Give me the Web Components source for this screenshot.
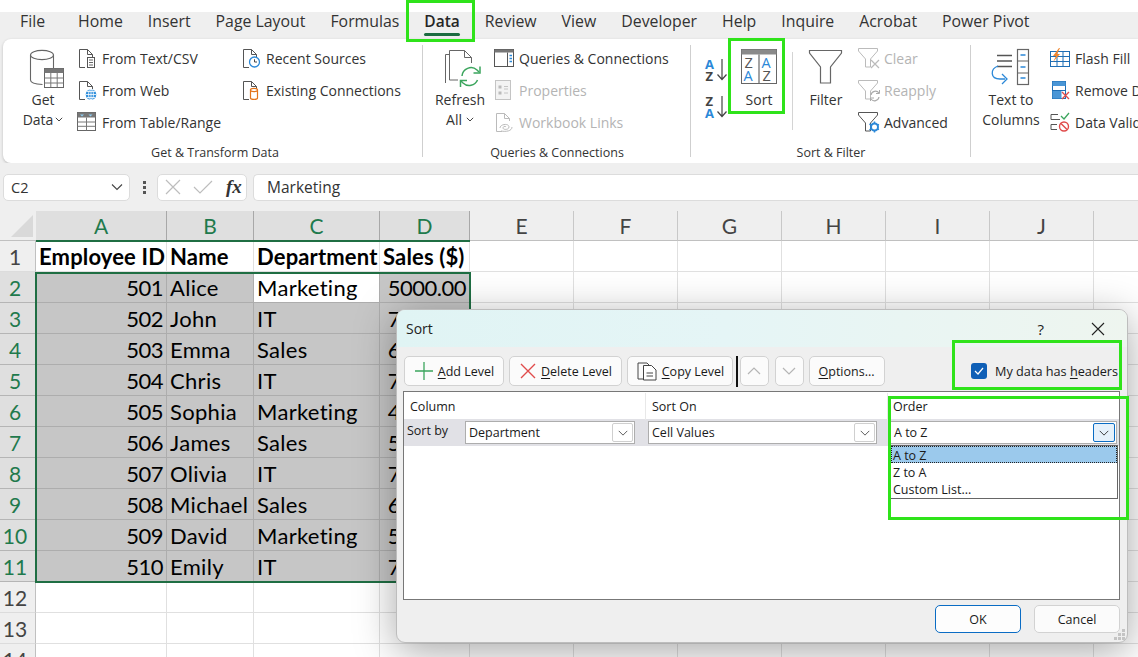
<!DOCTYPE html>
<html>
<head>
<meta charset="utf-8">
<title>Sort</title>
<style>
  html, body { margin: 0; padding: 0; background: #efefef; }
  body { width: 1138px; height: 657px; overflow: hidden; position: relative; font-family: "Open Sans", "Noto Sans", sans-serif; color: #262626; }
</style>
</head>
<body>
<excel-app></excel-app>
<script>
const page = 'M2.5 19.5V1.5h8l5 5v2.500M10.500 1.500V6.500h5M2.500 19.500H8'
const pageFill = `<path d="M2.500 19.500V1.500h8l5 5v13z" fill="#fff"/><path d="${page}" fill="none" stroke="#555"/>`
const grayPage = `<path d="${page}" fill="none" stroke="#bbb"/>`
const funnel = (c) => `<path d="M1.500 1.500h19v2.500l-7 8v8h-5v-8l-7-8z" fill="#fff" stroke="${c}"/>`

const ICONS = {
  getData: [36, 40, `<path d="M1.500 6c0-2.600 5.200-4.600 11.500-4.600S24.500 3.400 24.500 6v14M1.500 6v25c0 2.400 4.500 4.200 12 4.500M1.500 6c0 2.600 5.200 4.600 11.500 4.600S24.500 8.600 24.500 6" fill="#fff" stroke="#666" stroke-width="1.100"/><rect x="15.500" y="19.500" width="19" height="19" fill="#fff" stroke="#666"/><rect x="15.500" y="19.500" width="19" height="4.500" fill="#777"/><path d="M21.800 24v14M28.200 24v14M15.500 29h19M15.500 34h19" stroke="#777"/>`],
  fromText: [20, 20, pageFill + `<rect x="10.500" y="9.500" width="7" height="10" fill="#fff" stroke="#555"/><path d="M12 12h4M12 14.500h4M12 17h4" stroke="#666"/>`],
  fromWeb: [20, 20, pageFill + `<circle cx="14" cy="14.500" r="5.300" fill="#2f8fdc"/><path d="M8.700 14.500h10.600M14 9.200v10.600M10 11.500h8M10 17.500h8" stroke="#fff" stroke-width=".8"/><ellipse cx="14" cy="14.500" rx="2.400" ry="5.300" fill="none" stroke="#fff" stroke-width=".8"/>`],
  fromTable: [20, 20, `<rect x=".5" y=".5" width="18" height="18" fill="#fff" stroke="#666"/><rect x=".5" y=".5" width="18" height="5" fill="#777"/><path d="M3 2.500l2 2 2-2zM11.500 2.500l2 2 2-2z" fill="#8fd0f5"/><path d="M.5 10h18M.5 14.300h18M9.500 5.500v13" stroke="#777"/>`],
  recent: [20, 20, pageFill + `<circle cx="13.500" cy="14" r="5" fill="#fff" stroke="#2b88d8" stroke-width="1.300"/><path d="M13.500 11.300V14h2.500" fill="none" stroke="#444"/>`],
  existing: [20, 20, pageFill + `<path d="M9.500 10v8c0 .8 1.400 1.400 3.500 1.400s3.500-.6 3.500-1.400v-8z" fill="#fff" stroke="#e3741b" stroke-width="1.200"/><ellipse cx="13" cy="10" rx="3.500" ry="1.600" fill="#fff" stroke="#e3741b" stroke-width="1.200"/>`],
  refresh: [38, 40, `<path d="M1.500 34V5.500h4" fill="none" stroke="#666"/><path d="M5.500 31V1.500h15l7 7V14" fill="#fff" stroke="#666"/><path d="M20.500 1.500v7h7" fill="none" stroke="#666"/><path d="M5.500 31H14" stroke="#666"/><path d="M18 27a9 9 0 0 1 15-6l2 2M33.500 31a9 9 0 0 1-14.500 3l-2-2" fill="none" stroke="#3ba55d" stroke-width="1.500"/><path d="M36 17.500v6.500h-6.500M16.500 38v-6.500H23" fill="none" stroke="#3ba55d" stroke-width="1.500"/>`],
  queries: [20, 20, `<rect x=".5" y="1.500" width="19" height="17" fill="#fff" stroke="#555"/><rect x=".5" y="1.500" width="19" height="3" fill="#777"/><path d="M13.500 4.500v14" stroke="#555"/><path d="M15.500 7.500h2.500M15.500 10.500h2.500M15.500 13.500h2.500" stroke="#2b88d8" stroke-width="1.500"/>`],
  properties: [20, 20, `<rect x="1.500" y=".5" width="15" height="19" fill="#f3f3f3" stroke="#c4c4c4"/><path d="M4.500 5.500h3v3h-3zM4.500 11.500h3v3h-3z" fill="#bbb"/><path d="M10 6.500h4M10 9h4M10 13h4" stroke="#c4c4c4"/>`],
  links: [20, 20, grayPage + `<path d="M6 16c0-4 9-5 9-1 0 3-6 3-6 1s3-2 3-1M7 19c5 1 11 0 11-4" fill="none" stroke="#bbb"/>`],
  sortAsc: [23, 24, `<text x="0" y="11" font-size="13" font-weight="700" fill="#2b88d8" font-family="Open Sans">A</text><text x=".5" y="23" font-size="13" font-weight="700" fill="#444" font-family="Open Sans">Z</text><path d="M17 1v20M12.500 16.500l4.500 5 4.500-5" fill="none" stroke="#444" stroke-width="1.200"/>`],
  sortDesc: [23, 24, `<text x=".5" y="11" font-size="13" font-weight="700" fill="#444" font-family="Open Sans">Z</text><text x="0" y="23" font-size="13" font-weight="700" fill="#2b88d8" font-family="Open Sans">A</text><path d="M17 1v20M12.500 16.500l4.500 5 4.500-5" fill="none" stroke="#444" stroke-width="1.200"/>`],
  sort: [36, 36, `<rect x=".5" y=".5" width="35" height="34" fill="#fff" stroke="#666"/><rect x=".5" y=".5" width="35" height="5" fill="#8a8a8a"/><path d="M17.500 5.500v29M18.500 5.500v29" stroke="#666" stroke-width=".6"/><text x="3.500" y="19" font-size="14.500" fill="#555" font-family="Open Sans">Z</text><text x="2.500" y="32" font-size="14.500" fill="#2b88d8" font-family="Open Sans">A</text><text x="20.500" y="19" font-size="14.500" fill="#2b88d8" font-family="Open Sans">A</text><text x="21.500" y="32" font-size="14.500" fill="#555" font-family="Open Sans">Z</text>`],
  filter: [36, 36, `<path d="M1.500 1.500h32v2.500L22.500 18v16h-10V18L1.500 4z" fill="#fff" stroke="#666" stroke-width="1.200"/>`],
  clear: [24, 22, funnel('#bbb') + `<path d="M14 13l8 8M22 13l-8 8" stroke="#bbb" stroke-width="1.200"/>`],
  reapply: [24, 22, funnel('#bbb') + `<path d="M14 16a4.500 4.500 0 0 1 8-2M22 18a4.500 4.500 0 0 1-8 2" fill="none" stroke="#aaa" stroke-width="1.200"/><path d="M22.500 11v3.500H19M13.500 22v-3h3.500" fill="none" stroke="#aaa"/>`],
  advanced: [24, 22, funnel('#555') + `<circle cx="17.500" cy="16" r="3.500" fill="#fff" stroke="#2b88d8" stroke-width="2"/><path d="M17.500 10.500v11M12.500 13l10 6M12.500 19l10-6" stroke="#2b88d8" stroke-width="1.500" stroke-dasharray="1.500 8"/>`],
  textCols: [42, 38, `<path d="M10 6.500h15M10 12h15M10 17.500h15" stroke="#555" stroke-width="1.300"/><rect x="30.500" y=".5" width="11" height="35" fill="#fff" stroke="#666" stroke-width="1.200"/><path d="M30.500 12h11M30.500 24h11" stroke="#666" stroke-width="1.200"/><path d="M33.500 6h5M33.500 18h5M33.500 29h5" stroke="#2b88d8" stroke-width="1.500"/><path d="M11 17c-8 3-8 13 2 13h5M15 25l5 5-5 5" fill="none" stroke="#2b88d8" stroke-width="1.300"/>`],
  flash: [20, 20, `<rect x=".5" y="3.500" width="19" height="15" fill="#fff" stroke="#1f6eb5"/><path d="M.5 8.500h19M.5 13.500h19M7 3.500v15M13 3.500v15" stroke="#1f6eb5"/><path d="M9 0L3 8h3L3 14l7-8H7l3-6z" fill="#f0862e"/>`],
  dupes: [20, 20, `<rect x="2.500" y="1.500" width="13" height="17" fill="#fff" stroke="#1f6eb5"/><rect x="2.500" y="1.500" width="13" height="4.500" fill="#4a96d6"/><rect x="2.500" y="11" width="9" height="7.500" fill="#4a96d6"/><path d="M2.500 10.500h13" stroke="#1f6eb5"/><path d="M12 12l7 7M19 12l-7 7" stroke="#e04b4b" stroke-width="1.400"/>`],
  validate: [20, 20, `<path d="M1 2.500h7M1 7.500h9M1 12.500h6M1 17.500h6" stroke="#555" stroke-width="1.200"/><path d="M1 2.500v5M1 12.500v5" stroke="#555"/><path d="M11 4l3 3 5-6" fill="none" stroke="#3ba55d" stroke-width="1.300"/><circle cx="14" cy="14.500" r="4.500" fill="#fff" stroke="#e04b4b" stroke-width="1.400"/><path d="M11 11.500l6 6" stroke="#e04b4b" stroke-width="1.400"/>`],
  plus: [20, 20, `<path d="M10 1v18M1 10h18" stroke="#3ba55d" stroke-width="1.300"/>`],
  cross: [18, 18, `<path d="M2 2l14 14M16 2L2 16" stroke="#e04b4b" stroke-width="1.400"/>`],
  copy: [22, 20, `<path d="M2 18V2h9l2 2" fill="none" stroke="#444"/><path d="M2 18h5" stroke="#444"/><path d="M7.500 19V4.500h8l4.500 4.500v10z" fill="#fff" stroke="#444"/><path d="M10.500 12h6.500M10.500 15h6.500" stroke="#444"/>`],
  chevron: [12, 8, `<path d="M1 1.500l5 5 5-5" fill="none" stroke="currentColor" stroke-width="1.100"/>`],
  mini: [8, 5, `<path d="M.8 .8L4 4l3.200-3.200" fill="none" stroke="#444" stroke-width="1"/>`],
  chevronUp: [14, 8, `<path d="M1 7l6-6 6 6" fill="none" stroke="#b5b5b5" stroke-width="1.200"/>`],
  chevronDown: [14, 8, `<path d="M1 1l6 6 6-6" fill="none" stroke="#b5b5b5" stroke-width="1.200"/>`],
  close: [14, 14, `<path d="M1 1l12 12M13 1L1 13" stroke="#222" stroke-width="1.100"/>`],
  x: [16, 16, `<path d="M1 1l14 14M15 1L1 15" stroke="#bdbdbd" stroke-width="1.200"/>`],
  check: [20, 14, `<path d="M1 7l6 6L19 1" fill="none" stroke="#bdbdbd" stroke-width="1.200"/>`],
  tick: [10, 8, `<path d="M1 4l3 3 5-6" fill="none" stroke="#fff" stroke-width="1.200"/>`],
  grip: [12, 12, `<path d="M8 0h3v3H8zM4 4h3v3H4zM8 4h3v3H8zM0 8h3v3H0zM4 8h3v3H4zM8 8h3v3H8z" fill="#c4c4c4"/>`],
  corner: [22, 22, `<path d="M22 0v22H0z" fill="#d9d9d9"/>`]
}

class UiIcon extends HTMLElement {
  connectedCallback() {
    const [w, h, body] = ICONS[this.getAttribute('name')]
    this.attachShadow({ mode: 'open' }).innerHTML = `
      <style>:host { display: block; flex: none; width: ${w}px; height: ${h}px; line-height: 0; } svg { overflow: visible; }</style>
      <svg width="${w}" height="${h}" viewBox="0 0 ${w} ${h}">${body}</svg>`
  }
}

class RibbonTab extends HTMLElement {
  constructor() {
    super()
    this.attachShadow({ mode: 'open' }).innerHTML = `
      <style>
        :host { display: block; position: relative; font-size: 15.850px; line-height: 19px; color: #333; white-space: nowrap; }
        :host([active]) { font-weight: 600; font-size: 15.500px; color: #262626; }
        :host([active])::after { content: ""; position: absolute; left: 0; right: 0; top: 21px; height: 2.500px; background: #1c6b41; border-radius: 2px; }
      </style><slot></slot>`
  }
}

class RibbonGroup extends HTMLElement {
  constructor() {
    super()
    this.attachShadow({ mode: 'open' }).innerHTML = `
      <style>
        :host { display: flex; flex-direction: column; flex: none; position: relative; height: 124px; }
        :host(:not(:last-child))::after { content: ""; position: absolute; right: 0; top: 6px; bottom: 6px; width: 1px; background: #cfcfcf; }
        .body { display: flex; flex: 1; padding-top: 3px; min-height: 0; }
        .label { height: 20px; text-align: center; font-size: 12.500px; line-height: 19px; color: #333; white-space: nowrap; }
        :host(:first-child) .label { padding-left: 4px; }
      </style>
      <div class="body"><slot></slot></div>
      <div class="label"></div>`
  }
  connectedCallback() {
    this.shadowRoot.querySelector('.label').textContent = this.getAttribute('label')
  }
}

class BigButton extends HTMLElement {
  constructor() {
    super()
    this.attachShadow({ mode: 'open' }).innerHTML = `
      <style>
        :host { display: flex; flex: none; flex-direction: column; align-items: center; padding-top: 7px; box-sizing: border-box; font-size: 14px; line-height: 20px; text-align: center; color: #333; white-space: nowrap; }
        .icon { height: 41px; }
      </style>
      <div class="icon"><slot name="icon"></slot></div>
      <div><slot></slot></div>`
  }
}

class SmallButton extends HTMLElement {
  constructor() {
    super()
    this.attachShadow({ mode: 'open' }).innerHTML = `
      <style>
        :host { display: flex; align-items: center; gap: 5px; height: 32px; font-size: 14px; white-space: nowrap; color: #333; }
        :host([disabled]) { color: #b4b4b4; }
      </style>
      <slot name="icon"></slot><slot></slot>`
  }
}

class ExcelRibbon extends HTMLElement {
  constructor() {
    super()
    this.attachShadow({ mode: 'open' }).innerHTML = `
      <style>
        :host { display: block; }
        .top { height: 12px; background: #fff; }
        .tabs { display: flex; height: 27px; padding-left: 20px; gap: 25px; background: #efefef; }
        .card { display: flex; height: 124px; margin-left: 3px; background: #fff; border-radius: 8px 0 0 8px; box-shadow: 0 1px 3px rgba(0,0,0,.22); }
        .col { display: flex; flex-direction: column; flex: none; }
        .sort { display: flex; flex-direction: column; flex: none; gap: 13px; padding-top: 16px; margin-left: 14px; }
        .rule { flex: none; width: 1px; height: 78px; margin-top: 10px; background: #d4d4d4; }
        .down { display: inline-block; vertical-align: 3px; margin-left: 2px; }
      </style>
      <div class="top"></div>
      <div class="tabs">
        <ribbon-tab style="margin-right:8px">File</ribbon-tab><ribbon-tab>Home</ribbon-tab><ribbon-tab>Insert</ribbon-tab><ribbon-tab>Page Layout</ribbon-tab><ribbon-tab>Formulas</ribbon-tab><ribbon-tab active>Data</ribbon-tab><ribbon-tab>Review</ribbon-tab><ribbon-tab>View</ribbon-tab><ribbon-tab>Developer</ribbon-tab><ribbon-tab>Help</ribbon-tab><ribbon-tab>Inquire</ribbon-tab><ribbon-tab>Acrobat</ribbon-tab><ribbon-tab>Power Pivot</ribbon-tab>
      </div>
      <div class="card">
        <ribbon-group label="Get &amp; Transform Data" style="width:420px">
          <big-button style="width:56px;margin-left:12px"><ui-icon slot="icon" name="getData" style="margin-left:8px"></ui-icon>Get<br>Data<ui-icon class="down" name="mini"></ui-icon></big-button>
          <div class="col" style="width:164px;margin-left:6px">
            <small-button><ui-icon slot="icon" name="fromText"></ui-icon>From Text/CSV</small-button>
            <small-button><ui-icon slot="icon" name="fromWeb"></ui-icon>From Web</small-button>
            <small-button><ui-icon slot="icon" name="fromTable"></ui-icon>From Table/Range</small-button>
          </div>
          <div class="col">
            <small-button><ui-icon slot="icon" name="recent"></ui-icon>Recent Sources</small-button>
            <small-button><ui-icon slot="icon" name="existing"></ui-icon>Existing Connections</small-button>
          </div>
        </ribbon-group>
        <ribbon-group label="Queries &amp; Connections" style="width:268px">
          <big-button style="width:60px;margin-left:7px"><ui-icon slot="icon" name="refresh" style="margin-left:6px"></ui-icon>Refresh<br>All<ui-icon class="down" name="mini" style="margin-left:4px"></ui-icon></big-button>
          <div class="col" style="margin-left:4px">
            <small-button><ui-icon slot="icon" name="queries"></ui-icon>Queries &amp; Connections</small-button>
            <small-button disabled><ui-icon slot="icon" name="properties"></ui-icon>Properties</small-button>
            <small-button disabled><ui-icon slot="icon" name="links"></ui-icon>Workbook Links</small-button>
          </div>
        </ribbon-group>
        <ribbon-group label="Sort &amp; Filter" style="width:280px">
          <div class="sort"><ui-icon name="sortAsc"></ui-icon><ui-icon name="sortDesc"></ui-icon></div>
          <big-button style="width:40px;margin-left:11px"><ui-icon slot="icon" name="sort"></ui-icon>Sort</big-button>
          <div class="rule" style="margin-left:13px"></div>
          <big-button style="width:50px;margin-left:8px"><ui-icon slot="icon" name="filter"></ui-icon>Filter</big-button>
          <div class="col" style="margin-left:6px">
            <small-button disabled style="gap:3px"><ui-icon slot="icon" name="clear"></ui-icon>Clear</small-button>
            <small-button disabled style="gap:3px"><ui-icon slot="icon" name="reapply"></ui-icon>Reapply</small-button>
            <small-button style="gap:3px"><ui-icon slot="icon" name="advanced"></ui-icon>Advanced</small-button>
          </div>
        </ribbon-group>
        <ribbon-group label="Data Tools" style="width:395px">
          <big-button style="width:70px;margin-left:5px"><ui-icon slot="icon" name="textCols" style="margin-right:6px"></ui-icon>Text to<br>Columns</big-button>
          <div class="col" style="margin-left:4px">
            <small-button><ui-icon slot="icon" name="flash"></ui-icon>Flash Fill</small-button>
            <small-button><ui-icon slot="icon" name="dupes"></ui-icon>Remove Duplicates</small-button>
            <small-button><ui-icon slot="icon" name="validate"></ui-icon>Data Validation</small-button>
          </div>
        </ribbon-group>
      </div>`
  }
}

class FormulaBar extends HTMLElement {
  constructor() {
    super()
    this.attachShadow({ mode: 'open' }).innerHTML = `
      <style>
        :host { display: flex; align-items: center; height: 48px; padding: 0 0 0 3px; box-sizing: border-box; background: #efefef; font-size: 14.500px; color: #333; }
        .box { display: flex; align-items: center; height: 27px; box-sizing: border-box; background: #fff; border: 1px solid #dcdcdc; border-radius: 5px; }
        .name { width: 127px; padding: 0 6px 0 7px; justify-content: space-between; }
        .dots { display: flex; flex-direction: column; gap: 2px; width: 3px; margin: 0 11px 0 13px; }
        .dots i { width: 3px; height: 3px; background: #555; }
        .fx { width: 90px; padding-left: 7px; gap: 12px; }
        .fx b { font: italic 700 19px "Liberation Serif", serif; color: #333; margin-left: 1px; }
        .input { flex: 1; margin-left: 6px; padding-left: 13px; border-right: 0; border-radius: 5px 0 0 5px; font-size: 15.500px; }
      </style>
      <div class="box name"><span>C2</span><ui-icon name="chevron" style="color:#444"></ui-icon></div>
      <div class="dots"><i></i><i></i><i></i></div>
      <div class="box fx"><ui-icon name="x"></ui-icon><ui-icon name="check"></ui-icon><b>fx</b></div>
      <div class="box input">Marketing</div>`
  }
}

const ROWS = [
  [501, 'Alice', 'Marketing', '5000.00'], [502, 'John', 'IT', '7000.00'], [503, 'Emma', 'Sales', '6000.00'],
  [504, 'Chris', 'IT', '7500.00'], [505, 'Sophia', 'Marketing', '4500.00'], [506, 'James', 'Sales', '5500.00'],
  [507, 'Olivia', 'IT', '7200.00'], [508, 'Michael', 'Sales', '6500.00'], [509, 'David', 'Marketing', '5200.00'],
  [510, 'Emily', 'IT', '7800.00']
]

class DataSheet extends HTMLElement {
  constructor() {
    super()
    const root = this.attachShadow({ mode: 'open' })
    let html = `<div class="hd corner"><ui-icon name="corner"></ui-icon></div>`
    'ABCDEFGHIJK'.split('').forEach((c, i) => { html += `<div class="hd ${i < 4 ? 'on' : ''}">${c}</div>` })
    const cell = (txt, cls) => `<div class="c ${cls}">${txt}</div>`
    for (let r = 1; r <= 14; r++) {
      const sel = r >= 2 && r <= 11
      html += `<div class="rh ${sel ? 'on' : ''}">${r}</div>`
      for (let c = 0; c < 11; c++) {
        let txt = '', cls = ''
        if (r === 1 && c < 4) { txt = ['Employee ID', 'Name', 'Department', 'Sales ($)'][c]; cls = 'head' }
        if (sel && c < 4) {
          txt = ROWS[r - 2][c]
          cls = (r === 2 && c === 2 ? 'active' : 'sel') + (c === 0 || c === 3 ? ' num' : '')
        }
        html += cell(txt, cls)
      }
    }
    root.innerHTML = `
      <style>
        :host { display: block; position: relative; height: 446px; overflow: hidden; background: #fff; }
        .grid { display: grid; grid-template-columns: 36px 131px 87px 126px 90px repeat(7, 104px); grid-auto-rows: 31px; grid-template-rows: 30px; }
        .hd, .rh { display: flex; align-items: center; justify-content: center; box-sizing: border-box; background: #efefef; color: #444; font: 21px Lato, sans-serif; }
        .hd { border-right: 1px solid #c8c8c8; border-bottom: 1px solid #c0c0c0; }
        .rh { border-right: 1px solid #c0c0c0; border-bottom: 1px solid #dcdcdc; padding-right: 5px; }
        .hd.on { background: #dfdfdf; color: #1f7a4d; border-right-color: #a8a8a8; }
        .rh.on { background: #dfdfdf; color: #1f7a4d; border-bottom-color: #b5b5b5; }
        .corner { align-items: flex-end; justify-content: flex-end; padding: 0 3px 3px 0; border-right: 0; }
        .c { box-sizing: border-box; border-right: 1px solid #e0e0e0; border-bottom: 1px solid #e0e0e0; padding: 0 3px 0 3px; font: 22px/32px Lato, sans-serif; color: #000; white-space: nowrap; overflow: hidden; letter-spacing: .3px; }
        .head { font-weight: 700; letter-spacing: .15px; }
        .sel { background: #c6c6c6; border-color: #adadad; }
        .active { border-right-color: #adadad; border-bottom-color: #adadad; }
        .num { text-align: right; letter-spacing: -.5px; }
        .range { position: absolute; left: 35px; top: 61px; width: 436px; height: 311px; box-sizing: border-box; border: 2px solid #1f6e43; }
        .line { position: absolute; left: 36px; top: 29px; width: 434px; height: 2px; background: #1f6e43; }
      </style>
      <div class="grid">${html}</div>
      <div class="line"></div>
      <div class="range"></div>`
  }
}

class DlgButton extends HTMLElement {
  constructor() {
    super()
    this.attachShadow({ mode: 'open' }).innerHTML = `
      <style>
        :host { display: flex; flex: none; align-items: center; justify-content: center; gap: 4px; box-sizing: border-box; height: 30px; background: #fbfbfb; border: 1px solid #d2d2d2; border-radius: 5px; font-size: 12.500px; color: #1a1a1a; white-space: nowrap; }
        :host([primary]) { border: 1.500px solid #0a6cc4; background: #fdfdfd; }
      </style><slot></slot>`
  }
}

class DlgSelect extends HTMLElement {
  constructor() {
    super()
    this.attachShadow({ mode: 'open' }).innerHTML = `
      <style>
        :host { display: flex; align-items: center; justify-content: space-between; box-sizing: border-box; height: 23px; padding: 0 1px 0 3px; background: #fff; border: 1px solid #adadad; font-size: 12.500px; color: #1a1a1a; }
        .arrow { display: flex; align-items: center; justify-content: center; box-sizing: border-box; width: 21px; height: 19px; border: 1px solid #cfcfcf; border-radius: 2px; color: #555; }
        :host([open]) .arrow { background: #e6f1fb; border-color: #0a6cc4; color: #333; width: 22px; }
      </style>
      <slot></slot><div class="arrow"><ui-icon name="chevron" style="transform:scale(.85)"></ui-icon></div>`
  }
}

class SortDialog extends HTMLElement {
  constructor() {
    super()
    this.attachShadow({ mode: 'open' }).innerHTML = `
      <style>
        :host { display: flex; flex-direction: column; position: absolute; left: 396px; top: 309px; width: 732px; height: 334px; box-sizing: border-box; background: #efefef; border: 1px solid #bdbdbd; border-radius: 9px; box-shadow: 0 8px 40px rgba(0,0,0,.35); font-size: 12.500px; color: #1a1a1a; overflow: hidden; z-index: 2; }
        .title { display: flex; flex: none; align-items: center; height: 37px; padding-left: 9px; background: linear-gradient(90deg, #e0f4f4 0%, #e5f5f6 45%, #eef5ef 100%); font-size: 14px; color: #222; }
        .help { margin-left: auto; margin-right: 47px; font-size: 15px; }
        .close { margin-right: 22px; }
        .tools { display: flex; flex: none; align-items: center; height: 30px; margin-top: 9px; padding-left: 7px; gap: 5px; }
        .caret { flex: none; width: 1.500px; height: 31px; margin: 0 -3px 0 -2px; background: #111; }
        .hdr { display: flex; align-items: center; gap: 8px; margin-left: auto; margin-right: 9px; font-size: 12.700px; }
        .box { display: flex; align-items: center; justify-content: center; width: 16px; height: 16px; border-radius: 3px; background: #0f5fb6; }
        .list { flex: none; position: relative; height: 209px; margin: 5px 7px 0 6px; box-sizing: border-box; background: #fff; border: 1px solid #777; }
        .cols { display: grid; grid-template-columns: 242px 242px 1fr; height: 27px; padding-top: 1px; box-sizing: border-box; line-height: 27px; }
        .cols span { padding-left: 6px; border-right: 1px solid #e8e8e8; }
        .cols span:last-child { border-right: 0; padding-left: 5px; }
        .row { display: grid; grid-template-columns: 61px 170px 13px 229px 13px 227px; height: 27px; padding-top: 2px; box-sizing: border-box; background: #e1e1e6; }
        .by { padding-left: 3px; line-height: 20px; }
        .drop { position: absolute; left: 486px; top: 53px; width: 228px; height: 54px; box-sizing: border-box; background: #fff; border: 1px solid #666; line-height: 19px; }
        .drop div { height: 17px; padding-left: 2px; box-sizing: border-box; }
        .drop .on { background: #9bc9ec; outline: 1px dotted #222; outline-offset: -1px; }
        .foot { display: flex; flex: none; justify-content: flex-end; gap: 13px; margin-top: 5px; padding-right: 7px; }
        .foot dlg-button { width: 86px; height: 28px; }
        .grip { position: absolute; right: 1px; bottom: 1px; }
        u { text-underline-offset: 2px; }
      </style>
      <div class="title">Sort<span class="help">?</span><ui-icon class="close" name="close"></ui-icon></div>
      <div class="tools">
        <dlg-button style="width:100px"><ui-icon name="plus"></ui-icon><span><u>A</u>dd Level</span></dlg-button>
        <dlg-button style="width:113px"><ui-icon name="cross"></ui-icon><span><u>D</u>elete Level</span></dlg-button>
        <dlg-button style="width:106px"><ui-icon name="copy"></ui-icon><span><u>C</u>opy Level</span></dlg-button>
        <div class="caret"></div>
        <dlg-button style="width:29px"><ui-icon name="chevronUp"></ui-icon></dlg-button>
        <dlg-button style="width:29px;margin-left:1px"><ui-icon name="chevronDown"></ui-icon></dlg-button>
        <dlg-button style="width:76px"><span><u>O</u>ptions...</span></dlg-button>
        <div class="hdr"><div class="box"><ui-icon name="tick"></ui-icon></div><span>My data has <u>h</u>eaders</span></div>
      </div>
      <div class="list">
        <div class="cols"><span>Column</span><span>Sort On</span><span>Order</span></div>
        <div class="row">
          <div class="by">Sort by</div>
          <dlg-select>Department</dlg-select><div></div>
          <dlg-select>Cell Values</dlg-select><div></div>
          <dlg-select open>A to Z</dlg-select>
        </div>
        <div class="drop"><div class="on">A to Z</div><div>Z to A</div><div>Custom List...</div></div>
      </div>
      <div class="foot"><dlg-button primary>OK</dlg-button><dlg-button>Cancel</dlg-button></div>
      <ui-icon class="grip" name="grip"></ui-icon>`
  }
}

class MarkBox extends HTMLElement {
  constructor() {
    super()
    this.attachShadow({ mode: 'open' }).innerHTML = `<style>:host { display: block; position: absolute; box-sizing: border-box; border: 3px solid #2fe31a; z-index: 5; pointer-events: none; }</style>`
  }
}

class ExcelApp extends HTMLElement {
  constructor() {
    super()
    this.attachShadow({ mode: 'open' }).innerHTML = `
      <style>:host { display: block; }</style>
      <excel-ribbon></excel-ribbon>
      <formula-bar></formula-bar>
      <data-sheet></data-sheet>
      <sort-dialog></sort-dialog>
      <mark-box style="left:406px;top:0;width:69px;height:42px"></mark-box>
      <mark-box style="left:728px;top:38px;width:57px;height:76px"></mark-box>
      <mark-box style="left:952px;top:340px;width:170px;height:50px"></mark-box>
      <mark-box style="left:888px;top:396px;width:241px;height:124px"></mark-box>`
  }
}

customElements.define('ui-icon', UiIcon)
customElements.define('ribbon-tab', RibbonTab)
customElements.define('ribbon-group', RibbonGroup)
customElements.define('big-button', BigButton)
customElements.define('small-button', SmallButton)
customElements.define('excel-ribbon', ExcelRibbon)
customElements.define('formula-bar', FormulaBar)
customElements.define('data-sheet', DataSheet)
customElements.define('dlg-button', DlgButton)
customElements.define('dlg-select', DlgSelect)
customElements.define('sort-dialog', SortDialog)
customElements.define('mark-box', MarkBox)
customElements.define('excel-app', ExcelApp)
</script>
</body>
</html>
